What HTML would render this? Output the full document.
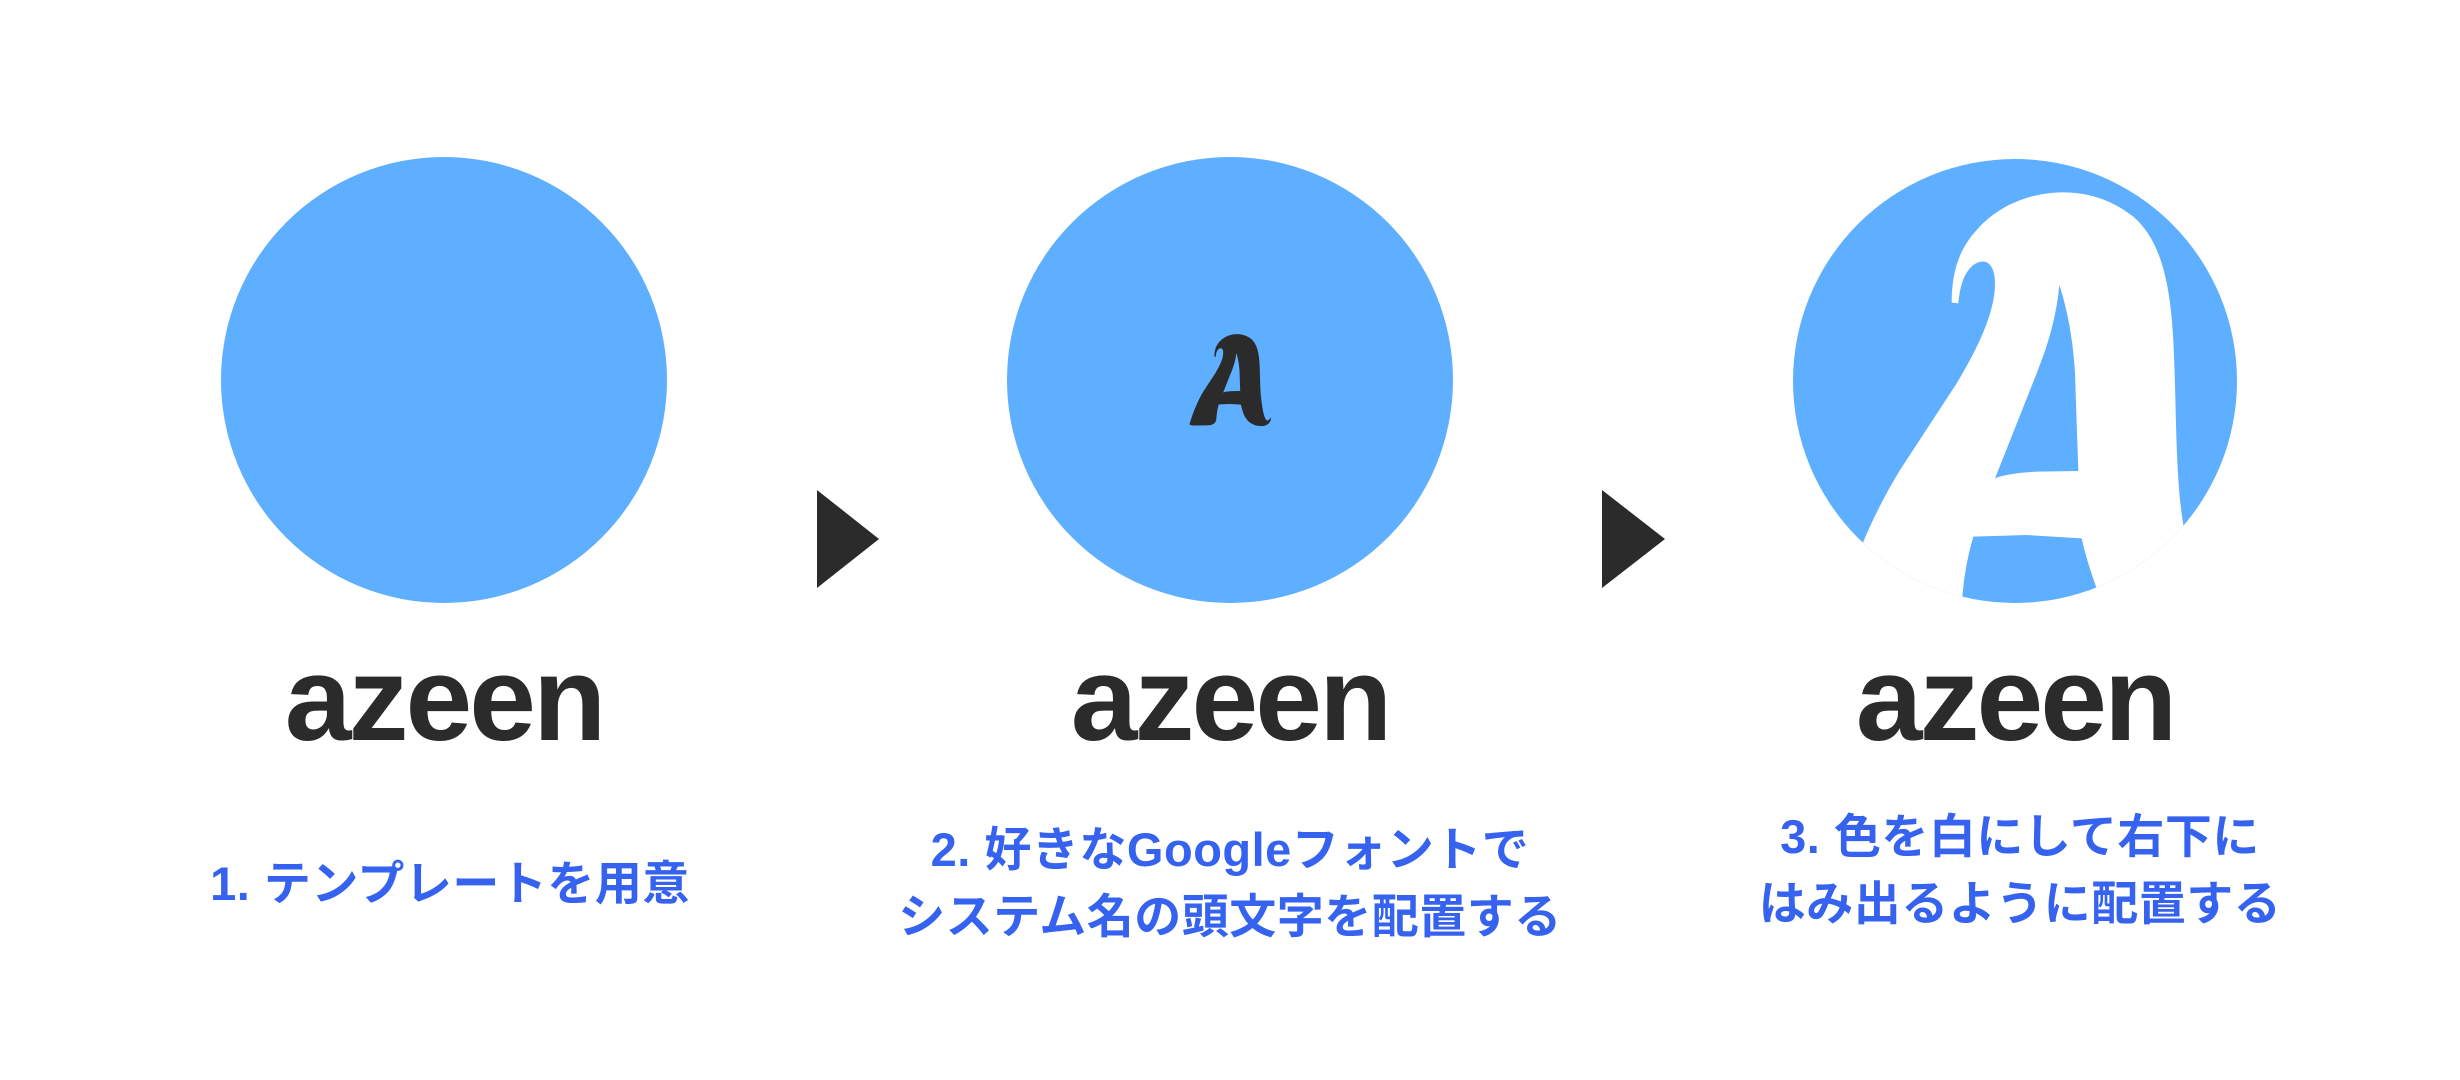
<!DOCTYPE html>
<html><head><meta charset="utf-8">
<style>
html,body{margin:0;padding:0;background:#fff;}
body{width:2460px;height:1080px;position:relative;overflow:hidden;}
.c{position:absolute;border-radius:50%;background:#5eafff;}
.w{position:absolute;width:700px;text-align:center;font-family:"Liberation Sans",sans-serif;font-weight:bold;font-size:120px;line-height:120px;color:#2b2b2b;letter-spacing:-3px;}
.t{position:absolute;width:900px;text-align:center;font-family:"Liberation Sans","Noto Sans CJK JP",sans-serif;font-weight:bold;font-size:47px;line-height:67px;color:#3562ee;white-space:nowrap;letter-spacing:0.5px;}
</style></head><body>
<div class="c" style="left:221px;top:157px;width:446px;height:446px"></div>
<div class="c" style="left:1007px;top:157px;width:446px;height:446px"></div>

<svg style="position:absolute;left:0;top:0" width="2460" height="1080">
<polygon points="817,490 879,539 817,588" fill="#2b2b2b"/>
<polygon points="1602,490 1665,539 1602,588" fill="#2b2b2b"/>
<defs>
<path id="A" fill-rule="evenodd" d="M 240,1480 C 270,1380 300,1290 340,1205 C 380,1110 420,1040 450,990 L 620,730 C 680,630 735,520 735,430 C 735,370 705,350 670,375 C 640,400 630,440 625,490 L 605,488 C 605,400 625,330 680,270 C 750,190 850,157 940,157 C 1030,157 1100,190 1150,230 C 1230,300 1260,420 1270,600 C 1280,800 1275,1000 1300,1155 C 1315,1280 1340,1400 1380,1430 C 1410,1420 1430,1400 1440,1380 C 1440,1460 1380,1510 1300,1510 C 1170,1510 1090,1450 1040,1345 C 1020,1290 1005,1240 995,1195 L 830,1185 L 670,1190 C 650,1260 640,1320 635,1400 C 630,1460 590,1500 500,1500 C 400,1500 240,1510 240,1480 Z M 928,435 C 950,500 970,600 975,700 L 985,993 L 860,995 C 800,998 760,1005 735,1015 L 860,700 C 900,600 920,520 928,435 Z"/>
<clipPath id="cc"><circle cx="795" cy="723" r="666"/></clipPath>
</defs>
<g transform="translate(1230,380) scale(0.068) translate(-835,-832)">
<use href="#A" fill="#2b2b2b"/>
</g>
<g transform="translate(1750,140) scale(0.33333)">
<circle cx="795" cy="723" r="666" fill="#5eafff"/>
<g clip-path="url(#cc)"><use href="#A" fill="#fff"/></g>
</g>
</svg>

<div class="w" style="left:94px;top:639px">azeen</div>
<div class="w" style="left:880px;top:639px">azeen</div>
<div class="w" style="left:1665px;top:639px">azeen</div>

<div class="t" style="left:0px;top:850px">1. テンプレートを用意</div>
<div class="t" style="left:780px;top:816px">2. 好きなGoogleフォントで<br>システム名の頭文字を配置する</div>
<div class="t" style="left:1570px;top:803px">3. 色を白にして右下に<br>はみ出るように配置する</div>
</body></html>
